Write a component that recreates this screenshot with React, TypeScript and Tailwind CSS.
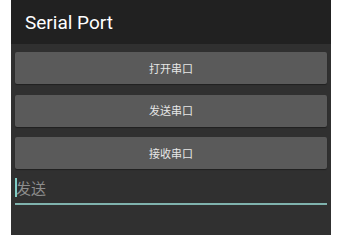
import React from "react";

const cjk = { fontFamily: '"Noto Sans CJK SC", "Noto Sans", sans-serif' };

export default function App() {
  const labels = ["打开串口", "发送串口", "接收串口"];
  return (
    <div className="w-[345px] h-[235px] bg-white flex">
      <div className="ml-[11px] w-[320px] h-[235px] bg-[#303030] flex flex-col">
        <div className="h-[44px] bg-[#212121] flex items-center pl-[14px]">
          <span
            className="text-[19px] font-normal text-white leading-none"
            style={{ fontFamily: 'Roboto, "Noto Sans", sans-serif' }}
          >
            Serial Port
          </span>
        </div>
        <div className="flex flex-col px-[4px] pt-[8px] gap-[10.5px]">
          {labels.map((l) => (
            <div
              key={l}
              className="h-[32px] rounded-[2px] bg-[#5a5a5a] flex items-center justify-center shadow-[0_1px_1px_rgba(0,0,0,0.35)]"
            >
              <span className="text-[11px] text-[#e6e6e6] leading-none" style={cjk}>
                {l}
              </span>
            </div>
          ))}
        </div>
        <div className="mx-[4px] mt-[9px] flex flex-col">
          <div className="h-[22px] flex items-start relative">
            <div className="absolute left-0 top-[0px] w-[2px] h-[19px] bg-[#80cbc4]" />
            <span className="text-[15px] text-[#8c8c8c] leading-none pl-[1px] pt-[2px]" style={cjk}>
              发送
            </span>
          </div>
          <div className="mt-[3px] h-[2px] bg-[#7fb2ad]" />
        </div>
      </div>
    </div>
  );
}
